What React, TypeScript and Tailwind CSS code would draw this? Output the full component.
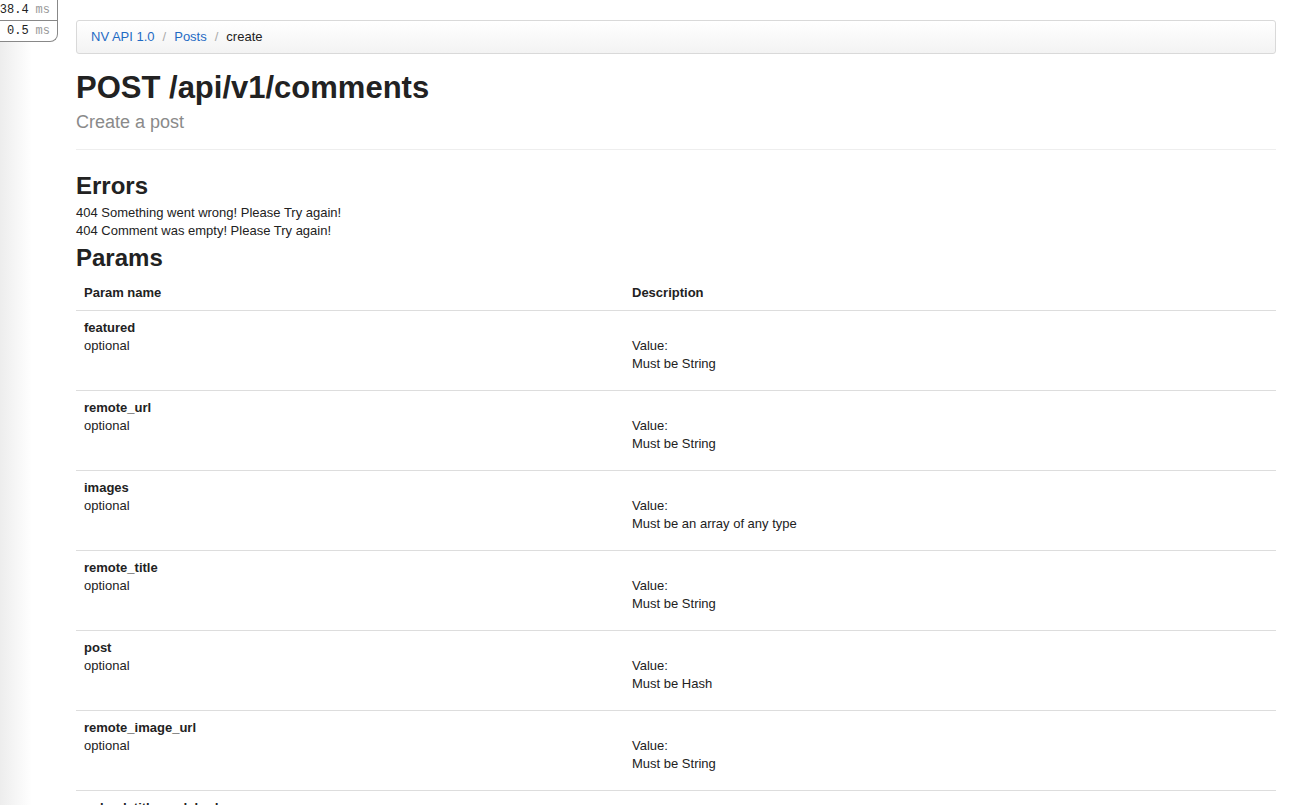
const params = [
  { name: "featured", desc: "Must be String" },
  { name: "remote_url", desc: "Must be String" },
  { name: "images", desc: "Must be an array of any type" },
  { name: "remote_title", desc: "Must be String" },
  { name: "post", desc: "Must be Hash" },
  { name: "remote_image_url", desc: "Must be String" },
  { name: "upload_title_and_body", desc: "Must be String" },
];

const errors = [
  "404 Something went wrong! Please Try again!",
  "404 Comment was empty! Please Try again!",
];

const ProfilerBadge = () => (
  <div className="absolute left-0 top-0 z-10 w-[58px] overflow-hidden whitespace-nowrap rounded-br-[8px] border-b border-r border-[#888] bg-white font-['Liberation_Mono',monospace] text-[12px] leading-[20px]">
    <div className="flex justify-end border-b border-[#888] pr-[7px]">
      <span className="text-[#222]">38.4</span>
      <span className="ml-[7px] text-[#999]">ms</span>
    </div>
    <div className="flex justify-end pr-[7px]">
      <span className="text-[#222]">0.5</span>
      <span className="ml-[7px] text-[#999]">ms</span>
    </div>
  </div>
);

export default function App() {
  return (
    <div className="relative h-[805px] overflow-hidden bg-white font-['Liberation_Sans',Arial,sans-serif] text-[13px] leading-[18px] text-[#333]">
      <div className="pointer-events-none absolute left-0 top-0 h-full w-[32px] bg-linear-to-r from-[#ededed] to-transparent" />
      <ProfilerBadge />

      <div className="ml-[76px] w-[1200px] pt-[20px]">
        <ul className="flex items-center rounded-[3px] border border-[#d9d9d9] bg-linear-to-b from-white to-[#f3f3f3] px-[14px] py-[7px] shadow-[inset_0_1px_0_#fff]">
          <li>
            <a href="#" className="text-[#1f6bc4]">NV API 1.0</a>
            <span className="px-[8px] text-[#aaa]">/</span>
          </li>
          <li>
            <a href="#" className="text-[#1f6bc4]">Posts</a>
            <span className="px-[8px] text-[#aaa]">/</span>
          </li>
          <li className="text-[#222]">create</li>
        </ul>

        <div className="border-b border-[#eee] pb-[17px]">
          <h1 className="mt-[16px] text-[31px] font-bold leading-[36px] text-[#222]">
            POST /api/v1/comments
          </h1>
          <div className="mt-[6px] text-[18px] leading-[20px] text-[#8a8a8a]">
            Create a post
          </div>
        </div>

        <h2 className="mt-[18px] text-[24px] font-bold leading-[36px] text-[#222]">
          Errors
        </h2>
        {errors.map((e) => (
          <div key={e} className="text-[#222]">{e}</div>
        ))}

        <h2 className="text-[24px] font-bold leading-[36px] text-[#222]">
          Params
        </h2>
        <table className="w-full border-collapse text-left">
          <thead>
            <tr className="border-b border-[#ddd]">
              <th className="w-[548px] px-[8px] py-[8px] font-bold text-[#222]">Param name</th>
              <th className="px-[8px] py-[8px] font-bold text-[#222]">Description</th>
            </tr>
          </thead>
          <tbody>
            {params.map((p) => (
              <tr key={p.name} className="border-b border-[#ddd]">
                <td className="px-[8px] pt-[8px] align-top">
                  <div className="font-bold text-[#222]">{p.name}</div>
                  <div className="text-[#222]">optional</div>
                </td>
                <td className="px-[8px] pb-[17px] pt-[8px] align-top text-[#222]">
                  <br />
                  <div>Value:</div>
                  <div>{p.desc}</div>
                </td>
              </tr>
            ))}
          </tbody>
        </table>
      </div>
    </div>
  );
}
